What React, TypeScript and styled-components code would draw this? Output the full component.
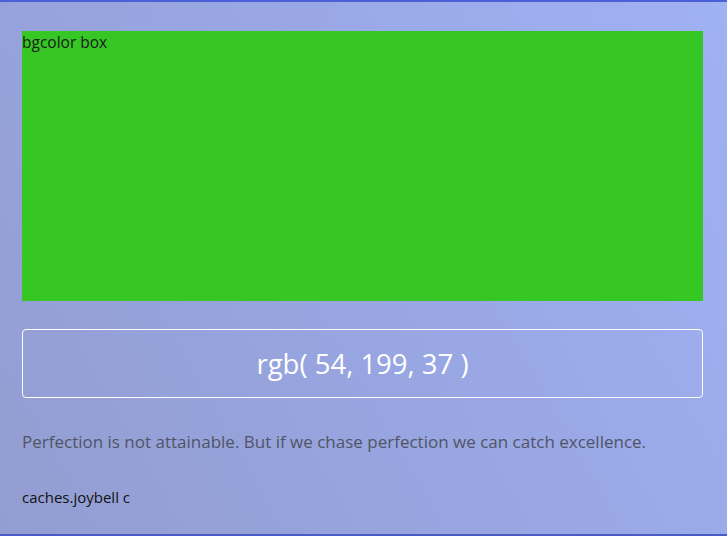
import styled, { createGlobalStyle } from "styled-components"

const GlobalStyle = createGlobalStyle`
  html, body {
    margin: 0;
    padding: 0;
  }
  body {
    font-family: "Open Sans", "Noto Sans", sans-serif;
  }
`

const Page = styled.div`
  box-sizing: border-box;
  height: 536px;
  padding: 29px 24px 0 22px;
  border-top: 2px solid #4b5fd6;
  border-bottom: 2px solid #4a5bc6;
  background: linear-gradient(60deg, #939dd1 0%, #98a6e2 50%, #a0b1f4 100%);
  display: flex;
  flex-direction: column;
`

const ColorBox = styled.div<{ $color: string }>`
  height: 270px;
  background: ${(p) => p.$color};
  color: #1a1a1a;
  font-size: 15.5px;
  line-height: 22px;
`

const ValueBox = styled.div`
  margin-top: 28px;
  height: 67px;
  border: 1px solid #ffffff;
  border-radius: 4px;
  display: flex;
  align-items: center;
  justify-content: center;
  color: #ffffff;
  font-size: 27.5px;
`

const Quote = styled.p`
  margin: 32px 0 0;
  color: #505565;
  font-size: 17px;
`

const Footer = styled.p`
  margin: 34px 0 0;
  color: #111;
  font-size: 15px;
`

export default function App() {
  const rgb = [54, 199, 37]
  return (
    <>
      <GlobalStyle />
      <Page>
        <ColorBox $color={`rgb(${rgb.join(",")})`}>bgcolor box</ColorBox>
        <ValueBox>rgb( {rgb.join(", ")} )</ValueBox>
        <Quote>
          Perfection is not attainable. But if we chase perfection we can catch
          excellence.
        </Quote>
        <Footer>caches.joybell c</Footer>
      </Page>
    </>
  )
}
